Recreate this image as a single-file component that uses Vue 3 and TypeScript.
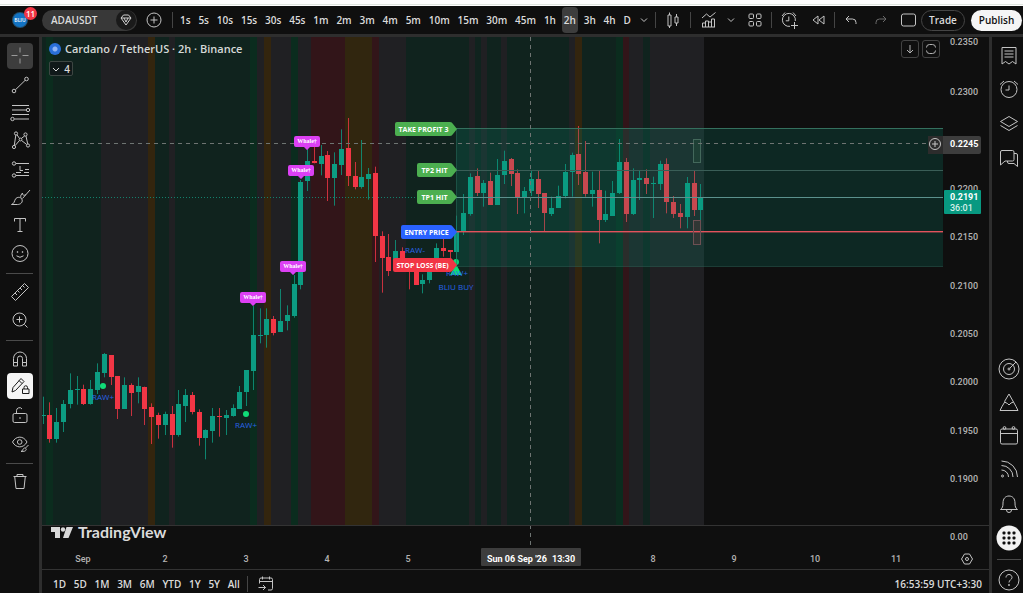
<script setup lang="ts">
interface Icon { label: string; d: string; active?: boolean; dim?: boolean }
type Row = [number, number, number, number, number]

const circ = (x: number, y: number, r: number): string =>
  `M${x - r} ${y}a${r} ${r} 0 1 0 ${2 * r} 0a${r} ${r} 0 1 0 ${-2 * r} 0`

const timeframes = ['1s', '5s', '10s', '15s', '30s', '45s', '1m', '2m', '3m', '4m', '5m', '10m', '15m', '30m', '45m', '1h', '2h', '3h', '4h', 'D']
const ranges = ['1D', '5D', '1M', '3M', '6M', 'YTD', '1Y', '5Y', 'All']

const drawTools: Icon[][] = [
  [
    { label: 'Crosshair', active: true, dim: true, d: 'M5.5 13.5h6M16.5 13.5h6M14 5.5v5M14 16.5v5' },
    { label: 'Trend line', d: `${circ(20.5, 8, 1.8)}${circ(8, 20, 1.8)}M9.5 18.7L19.2 9.3` },
    { label: 'Fibonacci', d: `M6 6.5h17M6 11h14.5${circ(22, 11, 1.7)}M6 15.5h17${circ(6.5, 20, 1.7)}M8.5 20h14.5` },
    { label: 'Patterns', d: `${circ(10, 6.5, 1.6)}${circ(19.5, 7.5, 1.6)}${circ(8, 20, 1.6)}${circ(22, 18.5, 1.6)}${circ(14.5, 12.5, 1.4)}M9.8 8.1L8.3 18.4M11 7.8L13.5 11.5M15.6 13.5L20.7 17.5M13.5 13.5L9 18.7M18.7 8.9L15.4 11.4M20 9.1L21.7 16.9` },
    { label: 'Projection', d: `${circ(8, 8.5, 1.7)}M10 8.5h13M14 11v4.5h3M19 14.5h4M10 17.5h5M18 17.5h5${circ(8, 20.5, 1.7)}M10 20.5h13` },
    { label: 'Brush', d: 'M5.5 21.5c3-1 2.5-3 4-5.5c1.5-2.2 5-2.3 6.3 0c1.5 3-1 5.5-4.3 5.5zM15 14.5c-1-2 .5-3 1.5-4.5M16.5 15.5l7.5-8.5M16.5 10c0 3 2 2.5 3.5 1.5' },
    { label: 'Text', d: 'M8.5 10.5v-3h11v3M14 7.5v13M11.5 20.5h5' },
    { label: 'Emoji', d: `${circ(14, 14.5, 8)}${circ(11.5, 13, 0.5)}${circ(16.5, 13, 0.5)}M10.5 16.8q3.5 3 7 0` },
  ],
  [
    { label: 'Measure', d: 'M5.5 18.5L18.5 5.5l4 4L9.5 22.5zM9 15l2 2M11.5 12.5l2 2M14 10l2 2M16.5 7.5l2 2' },
    { label: 'Zoom in', d: `${circ(13.5, 13.5, 6.5)}M13.5 10.5v6M10.5 13.5h6M18.5 18.5l3 3` },
  ],
  [
    { label: 'Magnet', d: 'M7.5 21v-7.5a6.5 6.5 0 0 1 13 0V21h-4v-7.5a2.5 2.5 0 0 0-5 0V21zM7.5 17.5h4M16.5 17.5h4' },
    { label: 'Stay in drawing mode', active: true, d: 'M6 20l1-4.5L15 6.5l3 3L9.5 18.5zM13 8.5l3 3M16.5 17h6.5v4.5h-6.5zM18 17v-1.5a1.7 1.7 0 0 1 3.5 0V17' },
    { label: 'Lock all drawings', d: 'M8.5 12.5h11a1.5 1.5 0 0 1 1.5 1.5v6a1.5 1.5 0 0 1-1.5 1.5h-11a1.5 1.5 0 0 1-1.5-1.5v-6a1.5 1.5 0 0 1 1.5-1.5zM10.5 12.5v-3a3 3 0 0 1 5.5-1.5M14 16v2' },
    { label: 'Hide drawings', d: `M6.5 13c3.5-6.5 11-6.5 14.5 0c-3.5 6.5-11 6.5-14.5 0z${circ(13.7, 13, 2.3)}M15 22.5c2-.5 1.5-3 3.5-3.5c2 0 2.5 2.5 0 3.2zM19.5 19l3-3` },
  ],
  [{ label: 'Remove', d: 'M7.5 8.5h13M11 8.5v-2h6v2M8.7 8.5l1.3 12h8l1.3-12' }],
]

const panelsTop: Icon[] = [
  { label: 'Watchlist', d: 'M7 5.5h14V22l-3.5-2.5L14 22l-3.5-2.5L7 22zM9.5 9h9M9.5 12h9M9.5 15h9' },
  { label: 'Alerts', d: `${circ(14, 13.5, 8)}M14 9.5v4.5h-3.5M5 8.5l4-3.5M23 8.5l-4-3.5` },
  { label: 'Object tree', d: 'M5.5 11.5L14 6.5l8.5 5l-8.5 5zM5.5 15.5L14 20.5l8.5-5' },
  { label: 'Chats', d: 'M5.5 8a1.5 1.5 0 0 1 1.5-1.5h10.5a1.5 1.5 0 0 1 1.5 1.5v7.5a1.5 1.5 0 0 1-1.5 1.5H10l-4.5 4zM19 9.5h2a1.5 1.5 0 0 1 1.5 1.5v11.5l-3.5-3h-5a1.5 1.5 0 0 1-1.5-1.5V17' },
]
const panelsBottom: Icon[] = [
  { label: 'Screeners', d: `${circ(14, 15, 10)}${circ(14, 15, 5.5)}${circ(14, 15, 1)}M14.7 14.3L21 8` },
  { label: 'Pine', d: 'M5 22.5h18L21 18.5l-2.5-4.5M5 22.5l2-4l3-5M9.5 13.5L14 6l4.5 8M9.5 14l3 1.5l1.5 1.5l2-2l2.5-1' },
  { label: 'Calendar', d: `M7 7h14a1.5 1.5 0 0 1 1.5 1.5v12a1.5 1.5 0 0 1-1.5 1.5H7A1.5 1.5 0 0 1 5.5 20.5V8.5A1.5 1.5 0 0 1 7 7zM5.5 11.5h17${circ(9.5, 6, 1.4)}${circ(18.5, 6, 1.4)}` },
  { label: 'News', d: `${circ(7.5, 20, 1)}M6.5 14a7 7 0 0 1 7 7M6.5 9.5a11.5 11.5 0 0 1 11.5 11.5M6.5 5a16 16 0 0 1 16 16` },
  { label: 'Notifications', d: 'M5.5 19.5c2-1.5 2.5-3 2.5-6.5c0-4.5 2.5-7 6-7s6 2.5 6 7c0 3.5.5 5 2.5 6.5zM11.5 20a2.5 2.5 0 0 0 5 0' },
]

const bandColours: Record<string, string> = { g: '#10231e', b: '#0b2c1e', n: '#202023', o: '#33250e', y: '#31260f', r: '#321519' }
const bandEdges: [number, string][] = [
  [42, 'g'], [46, 'b'], [53, 'g'], [101, 'n'], [148, 'o'], [155, 'g'], [169, 'n'], [175, 'g'], [250, 'b'], [257, 'n'],
  [264, 'o'], [271, 'n'], [291, 'b'], [298, 'n'], [311, 'r'], [345, 'y'], [372, 'r'], [379, 'n'], [406, 'g'], [469, 'n'],
  [475, 'g'], [481, 'n'], [487, 'g'], [501, 'n'], [507, 'g'], [569, 'n'], [575, 'o'], [582, 'g'], [616, 'b'], [623, 'r'],
  [629, 'n'], [643, 'g'], [650, 'n'], [704, ''],
]
const bands = bandEdges.slice(0, -1).map(([x, key], i) => ({ x, w: bandEdges[i + 1][0] - x, fill: bandColours[key] }))

// Each row: rising flag, body top, body bottom, high, low; in thirds of a unit below the section's base.
const sections: { base: number; rows: Row[] }[] = [
  { base: 290, rows: [
    [1, 375, 378, 320, 402], [0, 376, 448, 337, 458], [1, 396, 447, 354, 458], [1, 342, 396, 330, 426], [1, 300, 342, 250, 355],
    [1, 297, 300, 258, 344], [0, 296, 342, 284, 345], [1, 297, 342, 270, 344], [1, 246, 300, 220, 312], [1, 193, 249, 189, 262],
    [0, 195, 262, 195, 285], [0, 258, 357, 258, 387], [1, 285, 357, 262, 357], [0, 284, 309, 280, 378], [1, 289, 306, 262, 340],
    [0, 291, 357, 290, 405], [0, 350, 380, 340, 462], [0, 376, 405, 368, 446], [1, 372, 405, 365, 435], [0, 372, 435, 348, 473],
    [1, 342, 435, 300, 440], [1, 315, 348, 297, 396], [0, 315, 366, 306, 373], [0, 366, 444, 358, 467], [1, 420, 444, 418, 508],
    [1, 377, 423, 354, 458], [0, 377, 380, 354, 440], [1, 375, 384, 360, 435], [1, 354, 377, 343, 380], [1, 306, 356, 288, 356],
    [1, 240, 306, 240, 348], [1, 135, 242, 48, 300], [1, 135, 138, 55, 160], [1, 88, 135, 55, 173],
  ] },
  { base: 80, rows: [
    [0, 716, 759, 708, 766], [1, 723, 756, 627, 756], [1, 705, 724, 676, 751], [1, 612, 708, 585, 713], [1, 305, 615, 300, 628],
    [1, 244, 303, 205, 333], [0, 243, 248, 200, 250], [1, 227, 252, 195, 286], [0, 225, 294, 213, 363], [1, 252, 294, 217, 377],
    [1, 207, 255, 148, 285], [0, 204, 288, 114, 318], [0, 288, 321, 246, 328], [1, 291, 320, 180, 326], [1, 282, 296, 264, 359],
    [0, 279, 468, 260, 546], [0, 468, 534, 454, 638], [0, 531, 573, 462, 588], [1, 513, 543, 480, 560],
  ] },
  { base: 100, rows: [
    [0, 453, 480, 442, 500], [0, 490, 510, 480, 568], [0, 495, 555, 490, 555], [1, 540, 552, 523, 580], [1, 515, 540, 510, 550],
    [1, 445, 480, 430, 500], [0, 445, 453, 410, 470], [0, 450, 456, 450, 490], [1, 395, 456, 347, 480], [1, 339, 395, 282, 405],
    [1, 231, 343, 220, 347], [0, 228, 280, 205, 288], [1, 249, 280, 240, 320], [0, 244, 315, 218, 315], [1, 225, 315, 177, 315],
    [1, 182, 225, 152, 252], [0, 177, 222, 174, 258], [0, 220, 291, 208, 342], [1, 273, 291, 261, 340], [1, 237, 273, 210, 288],
    [0, 237, 282, 212, 324], [0, 280, 340, 280, 393], [1, 324, 342, 290, 348], [1, 289, 324, 257, 324], [1, 216, 289, 192, 295],
    [1, 165, 216, 158, 290], [0, 162, 222, 78, 255], [0, 216, 281, 123, 290], [1, 270, 282, 215, 320], [0, 270, 360, 210, 430],
    [1, 342, 360, 272, 366], [1, 279, 348, 243, 348], [1, 185, 279, 117, 282], [0, 186, 342, 174, 366], [1, 240, 342, 205, 345],
    [1, 234, 240, 212, 300], [0, 234, 252, 208, 282], [1, 249, 252, 230, 354], [1, 192, 252, 182, 270], [0, 192, 305, 175, 340],
    [0, 306, 342, 288, 354], [0, 339, 350, 312, 385], [1, 249, 350, 231, 385], [0, 249, 330, 212, 348], [1, 290, 330, 252, 365],
  ] },
]
const step = 6.78
const candles = sections
  .flatMap(({ base, rows }) => rows.map(([up, top, bottom, high, low]) => ({
    up: up === 1, top: base + top / 3, h: (bottom - top) / 3, high: base + high / 3, wick: (low - high) / 3,
  })))
  .map((c, i) => ({ ...c, x: 43.2 + i * step }))

const prices = [
  ['0.2350', 41], ['0.2300', 91], ['0.2200', 188], ['0.2150', 236], ['0.2100', 285],
  ['0.2050', 333], ['0.2000', 381], ['0.1950', 430], ['0.1900', 478], ['0.00', 536],
] as [string, number][]
const days = [['Sep', 83], ['2', 165], ['3', 246], ['4', 327], ['5', 408], ['8', 653], ['9', 734], ['10', 815], ['11', 896]] as [string, number][]
const tags = [
  { text: 'TAKE PROFIT 3', x: 395, y: 129, fill: '#4caf50' },
  { text: 'TP2 HIT', x: 417, y: 170, fill: '#4caf50' },
  { text: 'TP1 HIT', x: 417, y: 197, fill: '#4caf50' },
  { text: 'ENTRY PRICE', x: 401, y: 232, fill: '#2962ff' },
  { text: 'STOP LOSS (BE)', x: 393, y: 265, fill: '#f23645' },
]
const whales = [[253, 297], [293, 266], [301, 170], [307, 141]]
const signals = [['RAW+', 103, 400], ['RAW+', 246, 428], ['RAW-', 415, 253], ['RAW+', 457, 276], ['BLIU BUY', 456, 290]] as [string, number, number][]
const dots = [[103, 386], [246, 414], [456, 262]]
</script>

<template>
  <div class="app">
    <div class="strip"></div>
    <header class="topbar">
      <button class="avatar" aria-label="Account"><span class="face">BLIU</span><span class="badge">11</span></button>
      <button class="symbol">
        <span>ADAUSDT</span>
        <svg class="gem" viewBox="0 0 20 20"><path d="M5 8l2.5-3h5L15 8l-5 7zM5 8h10M8 8l2 4l2-4" /></svg>
      </button>
      <button class="tool plus" aria-label="Compare"><svg class="ic" viewBox="0 0 28 28"><path :d="circ(14, 14, 7) + 'M14 10.5v7M10.5 14h7'" /></svg></button>
      <i class="sep"></i>
      <nav class="frames">
        <button v-for="t in timeframes" :key="t" :class="{ on: t === '2h' }">{{ t }}</button>
      </nav>
      <button class="tool narrow" aria-label="More intervals"><svg class="ic" viewBox="0 0 28 28"><path d="M11 12.5l3 3l3-3" /></svg></button>
      <i class="sep"></i>
      <button class="tool wide" aria-label="Chart type"><svg class="ic" viewBox="0 0 28 28"><path d="M9 9h3v11H9zM10.5 6.5V9M10.5 20v2M16 11h3v6h-3zM17.5 8v3M17.5 17v3" /></svg></button>
      <i class="sep"></i>
      <button class="tool wide" aria-label="Indicators"><svg class="ic" viewBox="0 0 28 28"><path d="M8 12l4.5-4l3.5 3l5.5-4.5M8.5 21v-4h3v4M11.5 21v-6h3v6M14.5 21v-5h3v5M17.5 21v-8h3v8M8 21h13" /></svg></button>
      <button class="tool slim" aria-label="Favourite indicators"><svg class="ic" viewBox="0 0 28 28"><path d="M10 12.5l3 3l3-3" /></svg></button>
      <button class="tool grid" aria-label="Layouts"><svg class="ic" viewBox="0 0 28 28"><path d="M9 8h2.5q1 0 1 1v2.5q0 1-1 1H9q-1 0-1-1V9q0-1 1-1zM16.5 8H19q1 0 1 1v2.5q0 1-1 1h-2.5q-1 0-1-1V9q0-1 1-1zM9 15.5h2.5q1 0 1 1V19q0 1-1 1H9q-1 0-1-1v-2.5q0-1 1-1zM16.5 15.5H19q1 0 1 1V19q0 1-1 1h-2.5q-1 0-1-1v-2.5q0-1 1-1z" /></svg></button>
      <i class="sep"></i>
      <button class="tool wide" aria-label="Create alert"><svg class="ic" viewBox="0 0 28 28"><path d="M15 20.3a6.5 6.5 0 1 1 5.3-5.3M13.8 10.5v4.3h-3M7 10l3-3.5M21 10l-3-3.5M19.5 16v7M16 19.5h7" /></svg></button>
      <button class="tool tight" aria-label="Replay"><svg class="ic" viewBox="0 0 28 28"><path d="M12 10v8l-5-4zM18 10v8l-5-4z" /></svg></button>
      <i class="sep"></i>
      <button class="tool" aria-label="Undo"><svg class="ic" viewBox="0 0 28 28"><path d="M13 10l-3 3l3 3M10 13h6.5a3.5 3.5 0 0 1 3.5 3.5V18" /></svg></button>
      <button class="tool dim" aria-label="Redo"><svg class="ic" viewBox="0 0 28 28"><path d="M17 10l3 3l-3 3M20 13h-6.5A3.5 3.5 0 0 0 10 16.5V18" /></svg></button>
      <button class="tool square" aria-label="Layout"><svg class="ic" viewBox="0 0 28 28"><rect x="7.5" y="8" width="14" height="12" rx="2" /></svg></button>
      <button class="trade">Trade</button>
      <button class="publish">Publish</button>
    </header>

    <div class="body">
      <aside class="rail left">
        <template v-for="(group, g) in drawTools" :key="g">
          <hr v-if="g > 0" />
          <button v-for="t in group" :key="t.label" :aria-label="t.label" :class="{ on: t.active, soft: t.dim }">
            <svg class="ic" viewBox="0 0 28 28"><path :d="t.d" /></svg>
          </button>
        </template>
      </aside>

      <main class="chart">
        <div class="plot">
          <svg class="canvas" viewBox="42 37 947 532" preserveAspectRatio="xMinYMin meet">
            <rect v-for="b in bands" :key="b.x" :x="b.x" y="37" :width="b.w" height="488" :fill="b.fill" />
            <path class="last" d="M42 197.5H943" />
            <g v-for="c in candles" :key="c.x" :class="c.up ? 'up' : 'down'">
              <rect :x="Math.round(c.x - 0.5)" :y="c.high" width="1" :height="c.wick" opacity="0.8" />
              <rect :x="Math.round(c.x - 0.5) - 2" :y="Math.round(c.top)" width="5" :height="Math.max(1, Math.round(c.h))" />
            </g>
            <circle v-for="d in dots" :key="d[0]" :cx="d[0]" :cy="d[1]" r="3" fill="#10dc78" />
            <path d="M456 264l6 11h-12z" fill="#10dc78" />
            <rect x="456" y="129" width="487" height="137" fill="#089981" opacity="0.18" />
            <text v-for="s in signals" :key="s[1]" class="signal" :x="s[1]" :y="s[2]">{{ s[0] }}</text>
            <path d="M456.5 129v137M456 266.5H943" stroke="#2a6a5c" opacity="0.5" />
            <path d="M456 128.5H943" stroke="#34705e" />
            <path d="M456 170.5H943" stroke="#3a5e57" />
            <path d="M456 197.5H943" stroke="#5b918d" />
            <rect x="456" y="231" width="487" height="1" fill="#e2525c" />
            <rect x="456" y="232" width="487" height="1" fill="#e2525c" opacity="0.4" />
            <rect x="693.5" y="139.5" width="7" height="23" fill="#4caf50" fill-opacity="0.08" stroke="#43685b" />
            <rect x="693.5" y="220.5" width="7" height="24" fill="#f23645" fill-opacity="0.1" stroke="#6d5053" />
            <path class="cross" d="M42 143.5H928M530.5 37V548" />
            <g v-for="t in tags" :key="t.text">
              <path :d="`M${t.x + 2} ${t.y - 7}H450q2 0 3 2l4 5l-4 5q-1 2-3 2H${t.x + 2}q-2 0-2-2v-10q0-2 2-2z`" :fill="t.fill" />
              <text class="tag" :x="(t.x + 452) / 2" :y="t.y + 3">{{ t.text }}</text>
            </g>
            <g v-for="w in whales" :key="w[0]">
              <path :d="`M${w[0] - 11} ${w[1] - 5}h22q2 0 2 2v7q0 2-2 2h-8l-3 3l-3-3h-8q-2 0-2-2v-7q0-2 2-2z`" fill="#dc40f4" />
              <text class="whale" :x="w[0]" :y="w[1] + 2">Whale†</text>
            </g>
            <path class="axis" d="M42 525.5H989" />
            <text v-for="p in prices" :key="p[0]" class="scale" x="950" :y="p[1] + 4">{{ p[0] }}</text>
            <text v-for="d in days" :key="d[0]" class="scale mid" :x="d[1]" y="562">{{ d[0] }}</text>
            <path d="M928 136h15v18h-15z" fill="#2c2c2c" />
            <path d="M943 136h36q2 0 2 2v14q0 2-2 2h-36z" fill="#3d3d3d" />
            <path class="mark" :d="circ(935, 144, 5.5) + 'M935 141v6M932 144h6'" />
            <text class="scale strong" x="950" y="147">0.2245</text>
            <rect x="944" y="190" width="37" height="24" rx="1" fill="#089981" />
            <text class="scale strong" x="950" y="200">0.2191</text>
            <text class="scale count" x="950" y="211">36:01</text>
            <rect x="481" y="548" width="100" height="18" rx="1" fill="#3d3d3d" />
            <text class="scale strong" x="487" y="562">Sun 06 Sep '26</text>
            <text class="scale strong" x="552" y="562">13:30</text>
            <path class="mark" :d="circ(967, 559, 1.5) + 'M961.5 559l3-5h5l3 5l-3 5h-5z'" />
            <path d="M51 527h9v11h-5v-6h-4zM66.5 527H73l-4.5 11H63z" fill="#d8d8d8" />
            <circle cx="63" cy="529.5" r="2.2" fill="#d8d8d8" />
            <text class="brand" x="78" y="538">TradingView</text>
          </svg>
          <div class="legend"><span class="coin"></span><span>Cardano / TetherUS · 2h · Binance</span></div>
          <button class="fold"><svg viewBox="0 0 8 8"><path d="M1 3l3 3l3-3" /></svg>4</button>
          <div class="corner">
            <button aria-label="Move pane down"><svg viewBox="0 0 16 16"><path d="M8 4v8M5 9l3 3l3-3" /></svg></button>
            <button aria-label="Maximise pane"><svg viewBox="0 0 16 16"><path d="M3.5 6.5Q3.5 3.5 6.5 3.5M6.5 3.5h3M9.5 3.5Q12.5 3.5 12.5 6.5M12.5 9.5Q12.5 12.5 9.5 12.5M9.5 12.5h-3M6.5 12.5Q3.5 12.5 3.5 9.5" /></svg></button>
          </div>
        </div>
        <footer class="bottom">
          <nav class="ranges"><button v-for="r in ranges" :key="r">{{ r }}</button></nav>
          <i class="sep"></i>
          <button class="tool" aria-label="Go to date"><svg class="ic" viewBox="0 0 28 28"><path d="M7.5 13.5v-4a1.5 1.5 0 0 1 1.5-1.5h10a1.5 1.5 0 0 1 1.5 1.5v9a1.5 1.5 0 0 1-1.5 1.5h-3M7.5 11.5h13M10.5 6.5v3M17.5 6.5v3M6.5 17.5h7M11 15l2.5 2.5L11 20" /></svg></button>
          <button class="clock">16:53:59 UTC+3:30</button>
        </footer>
      </main>

      <aside class="rail right">
        <button v-for="p in panelsTop" :key="p.label" :aria-label="p.label"><svg class="ic" viewBox="0 0 28 28"><path :d="p.d" /></svg></button>
        <span class="grow"></span>
        <button v-for="p in panelsBottom" :key="p.label" :aria-label="p.label"><svg class="ic" viewBox="0 0 28 28"><path :d="p.d" /></svg></button>
        <button aria-label="Apps">
          <svg class="apps" viewBox="0 0 26 26">
            <circle cx="13" cy="13" r="12.5" fill="#f2f2f2" />
            <rect v-for="n in 9" :key="n" :x="6.5 + ((n - 1) % 3) * 5" :y="6.5 + Math.floor((n - 1) / 3) * 5" width="3" height="3" rx="1" fill="#0f0f0f" />
          </svg>
        </button>
        <hr />
        <button class="help" aria-label="Help"><svg class="ic" viewBox="0 0 28 28"><path :d="circ(14, 14, 10) + 'M11 11.5c0-4 6-4 6 0c0 2.2-3 2.3-3 5' + circ(14, 19, 0.6)" /></svg></button>
      </aside>
    </div>
  </div>
</template>

<style>
body { margin: 0; background: #0f0f0f; }
</style>

<style scoped>
.app { display: flex; flex-direction: column; height: 100vh; overflow: hidden; background: #0f0f0f; color: #dbdbdb; font: 600 10px/16px "Open Sans", "Noto Sans", sans-serif; }
button { margin: 0; padding: 0; border: 0; background: none; color: inherit; font: inherit; flex: none; display: flex; align-items: center; justify-content: center; cursor: pointer; white-space: nowrap; }
hr { border: 0; }
.strip { flex: none; height: 6px; box-sizing: border-box; background: #fff; border-top: 4px solid #fdfdfd; box-shadow: inset 0 1px #dfe5df; }
.topbar { flex: none; display: flex; align-items: center; height: 28px; border-bottom: 3px solid #2e2e2e; }
.ic { width: 28px; height: 28px; flex: none; fill: none; stroke: #c4c4c4; stroke-width: 1; }
.sep { flex: none; width: 1px; height: 16px; background: #454545; }
.avatar { position: relative; width: 26px; height: 26px; margin: 0 9px 0 7px; }
.face { width: 14px; height: 14px; border-radius: 50%; background: #1273c4; box-shadow: 0 0 0 1px #24506f; color: #fff; font-size: 5px; line-height: 14px; }
.badge { position: absolute; top: 0; right: -4px; width: 13px; height: 13px; border-radius: 50%; background: #f23645; color: #fff; font-size: 8px; line-height: 13px; }
.symbol { width: 95px; height: 21px; box-sizing: border-box; padding: 0 1px 0 9px; justify-content: space-between; border-radius: 11px; background: #383838; }
.gem { width: 20px; height: 20px; border-radius: 50%; background: #1a1a1a; fill: none; stroke: #d0d0d0; }
.tool { width: 30px; height: 24px; }
.plus { width: 34px; margin-right: 1px; }
.narrow { width: 22px; }
.slim { width: 14px; }
.grid { width: 32px; }
.tight { width: 28px; }
.square { width: 26px; }
.wide { width: 34px; }
.dim { opacity: 0.5; }
.frames { flex: none; width: 455px; margin-left: 5px; display: flex; justify-content: space-between; align-items: center; }
.frames button { height: 26px; padding: 0 2px; border-radius: 4px; }
.frames .on { background: #3d3d3d; }
.trade { width: 44px; height: 21px; box-sizing: border-box; margin-left: auto; border: 1px solid #454545; border-radius: 11px; }
.publish { width: 51px; height: 21px; margin: 0 1px 0 6px; border-radius: 11px; background: #f5f5f5; color: #0f0f0f; }
.body { flex: 1; min-height: 0; display: flex; }
.rail { flex: none; box-sizing: border-box; display: flex; flex-direction: column; align-items: center; }
.left { width: 42px; padding-top: 6px; border-right: 3px solid #2e2e2e; }
.left button { width: 26px; height: 28px; }
.left hr { flex: none; width: 27px; height: 1px; margin: 6px 0 4px; background: #4a4a4a; }
.left .on { height: 26px; margin: 0 0 2px; border-radius: 4px; background: #f5f5f5; }
.left .on .ic { stroke: #1a1a1a; }
.left .soft { background: #3d3d3d; }
.left .soft .ic { stroke: #9a9a9a; }
.right { width: 34px; padding-top: 2px; border-left: 3px solid #2e2e2e; padding-left: 3px; }
.right button { width: 28px; height: 34px; }
.right .grow { flex: 1; }
.right hr { flex: none; width: 24px; height: 1px; margin: 4px 0 7px; background: #4a4a4a; }
.right .help { height: 26px; }
.apps { width: 26px; height: 26px; }
.chart { flex: 1; min-width: 0; display: flex; flex-direction: column; }
.plot { flex: 1; min-height: 0; position: relative; }
.canvas { display: block; width: 100%; height: 100%; }
.last { stroke: #14806c; stroke-dasharray: 1 2; }
.up { fill: #0c9c82; }
.down { fill: #f23645; }
.cross { fill: none; stroke: #6e7472; stroke-dasharray: 4 4; }
.axis { stroke: #333; }
.signal { fill: #2864e6; font-size: 8px; font-weight: 400; text-anchor: middle; }
.tag { fill: #fff; font-size: 7px; font-weight: 700; text-anchor: middle; }
.whale { fill: #fff; font: 700 6px "Liberation Serif", serif; text-anchor: middle; }
.scale { fill: #b4b4b4; font: 500 9px Roboto, sans-serif; }
.mid { text-anchor: middle; }
.strong { fill: #fff; font-weight: 700; }
.count { fill: #d5efea; }
.mark { fill: none; stroke: #c4c4c4; }
.brand { fill: #dbdbdb; font: 700 16px Lato, sans-serif; }
.legend { position: absolute; left: 7px; top: 4px; display: flex; align-items: center; gap: 4px; font-size: 11px; white-space: nowrap; color: #d5d9d7; }
.coin { width: 12px; height: 12px; border-radius: 50%; background: radial-gradient(#8fb4f5 0 2px, #2a6fd8 3px); }
.fold { position: absolute; left: 7px; top: 24px; width: 24px; height: 15px; box-sizing: border-box; gap: 4px; border: 1px solid #3d4643; border-radius: 2px; background: #10191a; line-height: 12px; }
.fold svg { width: 8px; height: 8px; fill: none; stroke: #dbdbdb; }
.corner { position: absolute; right: 49px; top: 3px; display: flex; gap: 3px; }
.corner button { width: 18px; height: 18px; box-sizing: border-box; border: 1px solid #434343; border-radius: 3px; }
.corner svg { flex: none; width: 16px; height: 16px; fill: none; stroke: #b4b4b4; }
.bottom { flex: none; height: 24px; box-sizing: border-box; padding: 4px 7px 0 11px; border-top: 1px solid #333; display: flex; align-items: center; }
.ranges { width: 187px; margin-right: 7px; display: flex; justify-content: space-between; }
.bottom .tool { margin-left: 3px; height: 16px; }
.clock { margin-left: auto; }
</style>
